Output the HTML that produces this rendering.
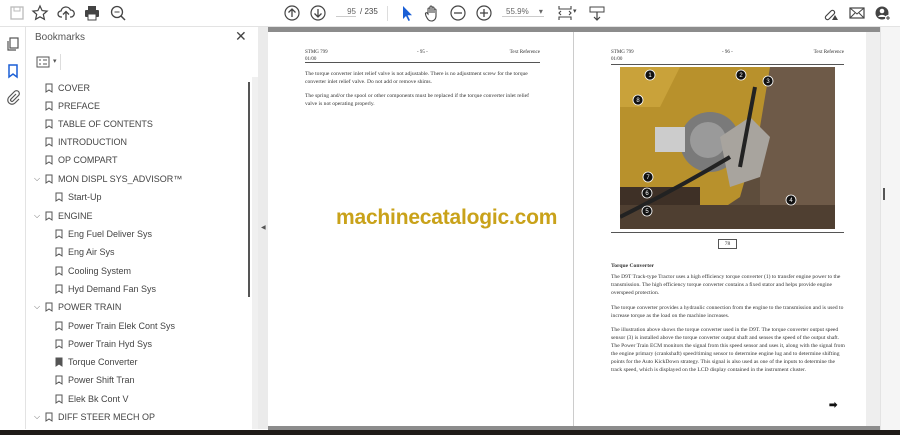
<!DOCTYPE html>
<html><head><meta charset="utf-8"><style>
*{margin:0;padding:0;box-sizing:border-box}
body{width:900px;height:435px;overflow:hidden;background:#fff;font-family:"Liberation Sans",sans-serif;position:relative}
.a{position:absolute}
.tb{left:0;top:0;width:900px;height:27px;background:#fff;border-bottom:1px solid #e3e3e3}
.ic{position:absolute;top:4px;width:18px;height:18px}
.rail{left:0;top:27px;width:26px;height:402px;background:#fff;border-right:1px solid #e3e3e3}
.panel{left:26px;top:27px;width:232px;height:402px;background:#fff}
.bm{position:absolute;font-size:9px;color:#444;white-space:nowrap;height:18px;line-height:18px}
.bm svg{position:absolute;left:-13px;top:4px}
.chev{position:absolute;left:-24px;top:0;font-size:8px;color:#666}
.ser{font-family:"Liberation Serif",serif;font-size:5.6px;line-height:7.9px;color:#333}
</style></head><body>
<div class="a tb">
 <svg class="ic" style="left:8px" viewBox="0 0 18 18"><rect x="3" y="3" width="12" height="12" fill="none" stroke="#bbb" stroke-width="1.3"/><rect x="6" y="3" width="6" height="4" fill="none" stroke="#bbb"/></svg>
 <svg class="ic" style="left:31px" viewBox="0 0 18 18"><path d="M9 2l2.1 4.6 5 .5-3.8 3.3 1.1 4.9L9 12.8 4.6 15.3l1.1-4.9L1.9 7.1l5-.5z" fill="none" stroke="#444" stroke-width="1.2"/></svg>
 <svg class="ic" style="left:57px" viewBox="0 0 18 18"><path d="M5 13H4a3 3 0 0 1 0-6 5 5 0 0 1 9.5-1A3.5 3.5 0 0 1 14 13h-1M9 16V8M6 10.5 9 7.5l3 3" fill="none" stroke="#444" stroke-width="1.3"/></svg>
 <svg class="ic" style="left:83px" viewBox="0 0 18 18"><rect x="5" y="2" width="8" height="4" fill="#444"/><rect x="2" y="6" width="14" height="7" rx="1" fill="#444"/><rect x="5" y="10" width="8" height="6" fill="#fff" stroke="#444"/></svg>
 <svg class="ic" style="left:109px" viewBox="0 0 18 18"><circle cx="8" cy="8" r="5.5" fill="none" stroke="#444" stroke-width="1.3"/><path d="M12 12l4 4" stroke="#444" stroke-width="1.5"/><path d="M5.5 8h5" stroke="#444" stroke-width="1"/></svg>
 <svg class="ic" style="left:283px" viewBox="0 0 18 18"><circle cx="9" cy="9" r="7" fill="none" stroke="#444" stroke-width="1.2"/><path d="M9 13V5M5.5 8.5 9 5l3.5 3.5" fill="none" stroke="#444" stroke-width="1.3"/></svg>
 <svg class="ic" style="left:309px" viewBox="0 0 18 18"><circle cx="9" cy="9" r="7" fill="none" stroke="#444" stroke-width="1.2"/><path d="M9 5v8M5.5 9.5 9 13l3.5-3.5" fill="none" stroke="#444" stroke-width="1.3"/></svg>
 <div class="a" style="left:336px;top:7px;width:20px;font-size:8px;color:#666;text-align:right;border-bottom:1px solid #ccc">95</div>
 <div class="a" style="left:360px;top:7px;font-size:8px;color:#444">/ 235</div>
 <div class="a" style="left:387px;top:6px;width:1px;height:15px;background:#ddd"></div>
 <svg class="ic" style="left:397px" viewBox="0 0 18 18"><path d="M6 2v13l3-3 2.5 5 1.5-.8-2.4-5H15z" fill="#1a5fd6"/></svg>
 <svg class="ic" style="left:423px" viewBox="0 0 18 18"><path d="M5 10V5a1 1 0 0 1 2 0v4V3a1 1 0 0 1 2 0v6V4a1 1 0 0 1 2 0v5V6a1 1 0 0 1 2 0v6c0 3-2 5-4.5 5S5 16 3 12l-.5-2a1 1 0 0 1 2-.5z" fill="none" stroke="#444" stroke-width="1.1"/></svg>
 <svg class="ic" style="left:449px" viewBox="0 0 18 18"><circle cx="9" cy="9" r="7" fill="none" stroke="#444" stroke-width="1.2"/><path d="M5 9h8" stroke="#444" stroke-width="1.3"/></svg>
 <svg class="ic" style="left:475px" viewBox="0 0 18 18"><circle cx="9" cy="9" r="7" fill="none" stroke="#444" stroke-width="1.2"/><path d="M5 9h8M9 5v8" stroke="#444" stroke-width="1.3"/></svg>
 <div class="a" style="left:502px;top:7px;width:42px;font-size:8px;color:#666;border-bottom:1px solid #ccc;padding-left:4px">55.9% <span style="margin-left:8px">▾</span></div>
 <svg class="ic" style="left:556px" viewBox="0 0 18 18"><path d="M3 2v3h12V2M3 16v-3h12v3M5 7l-2 2 2 2M13 7l2 2-2 2" fill="none" stroke="#444" stroke-width="1.1"/></svg>
 <div class="a" style="left:573px;top:7px;font-size:7px;color:#444">▾</div>
 <svg class="ic" style="left:588px" viewBox="0 0 18 18"><rect x="2" y="3" width="14" height="5" fill="none" stroke="#444"/><path d="M9 8v8M6 13l3 3 3-3" fill="none" stroke="#444" stroke-width="1.2"/></svg>
 <svg class="ic" style="left:822px" viewBox="0 0 18 18"><path d="M4 12l5-5a2 2 0 0 1 3 3l-5 5a2 2 0 0 1-3-3z" fill="none" stroke="#444" stroke-width="1.2"/><path d="M10 16l3-5 3 5z" fill="#444"/></svg>
 <svg class="ic" style="left:848px" viewBox="0 0 18 18"><rect x="2" y="4" width="14" height="10" fill="none" stroke="#444" stroke-width="1.2"/><path d="M2 4l7 6 7-6M2 14l5-5M16 14l-5-5" fill="none" stroke="#444"/></svg>
 <svg class="ic" style="left:874px" viewBox="0 0 18 18"><circle cx="8" cy="9" r="6.5" fill="#444"/><circle cx="8" cy="7" r="2.3" fill="#fff"/><path d="M4 13a4.5 4 0 0 1 8 0" fill="#fff"/><circle cx="14" cy="14" r="3" fill="#fff"/><path d="M14 12v4M12 14h4" stroke="#444"/></svg>
</div>
<div class="a rail">
 <svg class="a" style="left:5px;top:9px" width="16" height="16" viewBox="0 0 16 16"><rect x="5" y="2" width="8" height="10" fill="none" stroke="#555" stroke-width="1.2"/><path d="M3 5v9h8" fill="none" stroke="#555" stroke-width="1.2"/></svg>
 <svg class="a" style="left:5px;top:36px" width="16" height="16" viewBox="0 0 16 16"><path d="M4 2h8v12l-4-3-4 3z" fill="none" stroke="#1a5fd6" stroke-width="1.5"/></svg>
 <svg class="a" style="left:5px;top:62px" width="16" height="16" viewBox="0 0 16 16"><path d="M11 5l-5 5a1.4 1.4 0 0 0 2 2l5.5-5.5a2.8 2.8 0 0 0-4-4L4 8a4.2 4.2 0 0 0 6 6l4-4" fill="none" stroke="#555" stroke-width="1.2"/></svg>
</div>
<div class="a panel">
 <div class="a" style="left:9px;top:5px;font-size:10px;color:#555">Bookmarks</div>
 <div class="a" style="left:209px;top:1px;font-size:14px;color:#444">✕</div>
 <svg class="a" style="left:10px;top:29px" width="14" height="12" viewBox="0 0 14 12"><rect x="1" y="1" width="12" height="10" fill="none" stroke="#555"/><path d="M3 4h2M7 4h4M3 8h2M7 8h4" stroke="#555"/></svg>
 <div class="a" style="left:27px;top:30px;font-size:7px;color:#555">▾</div>
 <div class="a" style="left:34px;top:27px;width:1px;height:16px;background:#ddd"></div>
 <div class="a" style="left:226px;top:50px;width:6px;height:352px;background:#f0f0f0"></div>
 <div class="a" style="left:222px;top:55px;width:2px;height:215px;background:#555"></div>
</div>
<div class="a" style="left:258px;top:27px;width:10px;height:402px;background:#ebebeb"></div>
<div class="a" style="left:261px;top:224px;font-size:6px;color:#555">◀</div>
<div class="a" style="left:268px;top:27px;width:612px;height:402px;background:#fff"></div>
<div class="a" style="left:268px;top:27px;width:612px;height:5px;background:#8c8c8c"></div>
<div class="a" style="left:268px;top:426px;width:612px;height:4px;background:#8c8c8c"></div>
<div class="a" style="left:573px;top:32px;width:1px;height:394px;background:#ccc"></div>
<div class="a" style="left:866px;top:32px;width:14px;height:394px;background:#eeeeee"></div>
<div class="a" style="left:880px;top:27px;width:20px;height:403px;background:#f5f5f5;border-left:1px solid #e3e3e3"></div>
<div class="a" style="left:883px;top:188px;width:2px;height:12px;background:#555"></div>
<div class="a" style="left:0;top:430px;width:900px;height:5px;background:#1f1b18"></div>

<!-- page 1 -->
<div class="a ser" style="left:305px;top:49px;width:235px;border-bottom:1px solid #555;height:14px;font-size:5px;line-height:7px">
 <span style="position:absolute;left:0">STMG 799<br>01/00</span><span style="position:absolute;left:112px">- 95 -</span><span style="position:absolute;right:0">Text Reference</span></div>
<div class="a ser" style="left:305px;top:71px;width:232px">The torque converter inlet relief valve is not adjustable. There is no adjustment screw for the torque converter inlet relief valve. Do not add or remove shims.<div style="height:6px"></div>The spring and/or the spool or other components must be replaced if the torque converter inlet relief valve is not operating properly.</div>
<div class="a" style="left:336px;top:206px;font-size:21px;font-weight:bold;color:#c9a21a;letter-spacing:-0.2px">machinecatalogic.com</div>

<!-- page 2 -->
<div class="a ser" style="left:611px;top:49px;width:233px;border-bottom:1px solid #555;height:16px;font-size:5px;line-height:7px">
 <span style="position:absolute;left:0">STMG 799<br>01/00</span><span style="position:absolute;left:111px">- 96 -</span><span style="position:absolute;right:0">Text Reference</span></div>
<svg class="a" style="left:620px;top:67px" width="215" height="162" viewBox="0 0 215 162">
 <rect width="215" height="162" fill="#5e4d3c"/>
 <rect x="140" y="0" width="75" height="162" fill="#6e5a48"/>
 <path d="M0 0h150l-10 60-20 70-30 20H40L0 120z" fill="#b8912c"/>
 <path d="M0 0h60l-20 40H0z" fill="#c9a23a"/>
 <rect x="0" y="120" width="80" height="42" fill="#3e3026"/>
 <rect x="0" y="138" width="215" height="24" fill="#4f3f31"/>
 <circle cx="90" cy="75" r="30" fill="#7a7a7a"/><circle cx="88" cy="73" r="18" fill="#9a9a9a"/>
 <path d="M100 70l30-20 20 20-10 40-30 10z" fill="#a8a49e"/>
 <rect x="35" y="60" width="30" height="25" fill="#ccc"/>
 <path d="M0 150q60-30 110-60" stroke="#222" stroke-width="4" fill="none"/>
 <path d="M135 20l-15 80" stroke="#222" stroke-width="4" fill="none"/>
 <g fill="#111" stroke="#fff" stroke-width=".8"><circle cx="30" cy="8" r="5"/><circle cx="121" cy="8" r="5"/><circle cx="148" cy="14" r="5"/><circle cx="18" cy="33" r="5"/><circle cx="28" cy="110" r="5"/><circle cx="27" cy="126" r="5"/><circle cx="27" cy="144" r="5"/><circle cx="171" cy="133" r="5"/></g>
 <g fill="#fff" font-size="6" font-family="Liberation Sans" text-anchor="middle"><text x="30" y="10">1</text><text x="121" y="10">2</text><text x="148" y="16">3</text><text x="18" y="35">8</text><text x="28" y="112">7</text><text x="27" y="128">6</text><text x="27" y="146">5</text><text x="171" y="135">4</text></g>
</svg>
<div class="a" style="left:611px;top:232px;width:233px;height:1px;background:#555"></div>
<div class="a ser" style="left:718px;top:239px;width:19px;height:10px;border:1px solid #555;text-align:center;line-height:8px">78</div>
<div class="a ser" style="left:611px;top:263px;width:234px"><b>Torque Converter</b><div style="height:3px"></div>The D9T Track-type Tractor uses a high efficiency torque converter (1) to transfer engine power to the transmission. The high efficiency torque converter contains a fixed stator and helps provide engine overspeed protection.<div style="height:7px"></div>The torque converter provides a hydraulic connection from the engine to the transmission and is used to increase torque as the load on the machine increases.<div style="height:7px"></div>The illustration above shows the torque converter used in the D9T. The torque converter output speed sensor (3) is installed above the torque converter output shaft and senses the speed of the output shaft. The Power Train ECM monitors the signal from this speed sensor and uses it, along with the signal from the engine primary (crankshaft) speed/timing sensor to determine engine lug and to determine shifting points for the Auto KickDown strategy. This signal is also used as one of the inputs to determine the track speed, which is displayed on the LCD display contained in the instrument cluster.</div>
<div class="a" style="left:829px;top:400px;font-size:10px;color:#111;font-weight:bold">➡</div>

<div class="bm" style="left:58px;top:79px"><svg width="8" height="10"><path d="M1 1h6v8l-3-2-3 2z" fill="none" stroke="#555"/></svg>COVER</div>
<div class="bm" style="left:58px;top:97px"><svg width="8" height="10"><path d="M1 1h6v8l-3-2-3 2z" fill="none" stroke="#555"/></svg>PREFACE</div>
<div class="bm" style="left:58px;top:115px"><svg width="8" height="10"><path d="M1 1h6v8l-3-2-3 2z" fill="none" stroke="#555"/></svg>TABLE OF CONTENTS</div>
<div class="bm" style="left:58px;top:133px"><svg width="8" height="10"><path d="M1 1h6v8l-3-2-3 2z" fill="none" stroke="#555"/></svg>INTRODUCTION</div>
<div class="bm" style="left:58px;top:151px"><svg width="8" height="10"><path d="M1 1h6v8l-3-2-3 2z" fill="none" stroke="#555"/></svg>OP COMPART</div>
<div class="bm" style="left:58px;top:170px"><span class="chev">⌵</span><svg width="8" height="10"><path d="M1 1h6v8l-3-2-3 2z" fill="none" stroke="#555"/></svg>MON DISPL SYS_ADVISOR™</div>
<div class="bm" style="left:68px;top:188px"><svg width="8" height="10"><path d="M1 1h6v8l-3-2-3 2z" fill="none" stroke="#555"/></svg>Start-Up</div>
<div class="bm" style="left:58px;top:207px"><span class="chev">⌵</span><svg width="8" height="10"><path d="M1 1h6v8l-3-2-3 2z" fill="none" stroke="#555"/></svg>ENGINE</div>
<div class="bm" style="left:68px;top:225px"><svg width="8" height="10"><path d="M1 1h6v8l-3-2-3 2z" fill="none" stroke="#555"/></svg>Eng Fuel Deliver Sys</div>
<div class="bm" style="left:68px;top:243px"><svg width="8" height="10"><path d="M1 1h6v8l-3-2-3 2z" fill="none" stroke="#555"/></svg>Eng Air Sys</div>
<div class="bm" style="left:68px;top:262px"><svg width="8" height="10"><path d="M1 1h6v8l-3-2-3 2z" fill="none" stroke="#555"/></svg>Cooling System</div>
<div class="bm" style="left:68px;top:280px"><svg width="8" height="10"><path d="M1 1h6v8l-3-2-3 2z" fill="none" stroke="#555"/></svg>Hyd Demand Fan Sys</div>
<div class="bm" style="left:58px;top:298px"><span class="chev">⌵</span><svg width="8" height="10"><path d="M1 1h6v8l-3-2-3 2z" fill="none" stroke="#555"/></svg>POWER TRAIN</div>
<div class="bm" style="left:68px;top:317px"><svg width="8" height="10"><path d="M1 1h6v8l-3-2-3 2z" fill="none" stroke="#555"/></svg>Power Train Elek Cont Sys</div>
<div class="bm" style="left:68px;top:335px"><svg width="8" height="10"><path d="M1 1h6v8l-3-2-3 2z" fill="none" stroke="#555"/></svg>Power Train Hyd Sys</div>
<div class="bm" style="left:68px;top:353px"><svg width="8" height="10"><path d="M1 1h6v8l-3-2-3 2z" fill="#555" stroke="#555"/></svg>Torque Converter</div>
<div class="bm" style="left:68px;top:371px"><svg width="8" height="10"><path d="M1 1h6v8l-3-2-3 2z" fill="none" stroke="#555"/></svg>Power Shift Tran</div>
<div class="bm" style="left:68px;top:390px"><svg width="8" height="10"><path d="M1 1h6v8l-3-2-3 2z" fill="none" stroke="#555"/></svg>Elek Bk Cont V</div>
<div class="bm" style="left:58px;top:408px"><span class="chev">⌵</span><svg width="8" height="10"><path d="M1 1h6v8l-3-2-3 2z" fill="none" stroke="#555"/></svg>DIFF STEER MECH OP</div>
</body></html>
